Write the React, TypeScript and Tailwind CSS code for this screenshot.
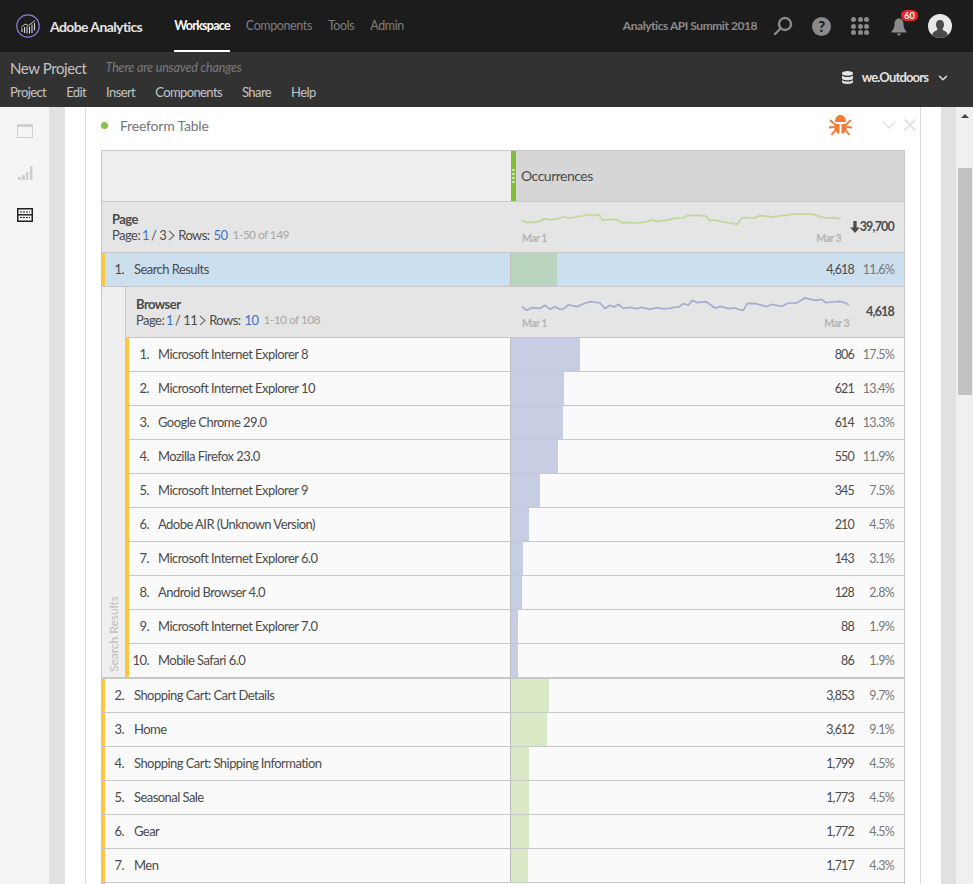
import { ChevronDown, X } from "lucide-react";

const GREEN_LINE =
  "66,210 80,216 100,216 118,213 133,205 150,208 175,205 190,200 215,203 235,198 250,197 268,192 280,196 297,192 308,210 325,207 350,208 365,217 385,216 405,218 440,215 455,209 470,213 495,210 525,204 548,203 565,195 590,195 617,197 630,211 645,209 665,214 690,218 712,222 725,203 740,201 760,204 780,196 800,198 820,200 845,195 860,195 880,191 940,192 960,199 980,203 1000,202 1022,206";
const BLUE_LINE =
  "66,472 80,483 95,475 120,477 135,468 150,480 165,472 180,480 190,479 205,467 232,472 250,463 272,457 300,461 315,477 330,468 342,473 355,465 370,477 390,474 410,478 425,474 450,480 470,475 485,478 510,477 525,473 535,474 550,463 565,467 577,453 592,460 618,457 645,476 662,471 685,478 705,476 729,484 742,463 765,462 800,472 815,465 845,471 865,461 890,461 915,446 945,453 965,450 978,460 1000,458 1018,456 1035,460 1046,467";

const browsers = [
  ["1.", "Microsoft Internet Explorer 8", "806", "17.5%", 69],
  ["2.", "Microsoft Internet Explorer 10", "621", "13.4%", 53],
  ["3.", "Google Chrome 29.0", "614", "13.3%", 52],
  ["4.", "Mozilla Firefox 23.0", "550", "11.9%", 47],
  ["5.", "Microsoft Internet Explorer 9", "345", "7.5%", 29],
  ["6.", "Adobe AIR (Unknown Version)", "210", "4.5%", 18],
  ["7.", "Microsoft Internet Explorer 6.0", "143", "3.1%", 12],
  ["8.", "Android Browser 4.0", "128", "2.8%", 11],
  ["9.", "Microsoft Internet Explorer 7.0", "88", "1.9%", 7],
  ["10.", "Mobile Safari 6.0", "86", "1.9%", 7],
] as const;

const pages = [
  ["2.", "Shopping Cart: Cart Details", "3,853", "9.7%", 38],
  ["3.", "Home", "3,612", "9.1%", 36],
  ["4.", "Shopping Cart: Shipping Information", "1,799", "4.5%", 18],
  ["5.", "Seasonal Sale", "1,773", "4.5%", 18],
  ["6.", "Gear", "1,772", "4.5%", 18],
  ["7.", "Men", "1,717", "4.3%", 17],
] as const;

function Logo() {
  return (
    <svg width="24" height="24" viewBox="0 0 24 24" fill="none">
      <circle cx="12" cy="12" r="11.2" stroke="#8f7fe0" strokeWidth="1.2" />
      <path d="M5 13.5 9 10l3.5 1.5L19 6.5" stroke="#d8d8d8" strokeWidth="0.9" />
      <path d="M6 14.5v3.5M8.5 13v6M11 12.5v7M13.5 12.5v7M16 10.5v8.5M18.5 9v7.5" stroke="#d8d8d8" strokeWidth="1.1" />
    </svg>
  );
}

function Bug() {
  return (
    <svg width="25" height="21" viewBox="0 0 25 21" fill="#f47b35" stroke="none">
      <path d="M7 7C7 2.500 9.500 0 12.500 0S18 2.500 18 7z" />
      <path d="M6.500 9h5v9.500h-2L6.500 15zM13.500 9h5v6l-3 3.500h-2z" />
      <path d="M2 5l5 4.500M1 12.500l5.500-.5M3.500 20l3.500-4.500M23 5l-5 4.500M24 12.500l-5.500-.5M21.500 20 18 15.500" stroke="#f47b35" strokeWidth="2" />
    </svg>
  );
}

function Pager({ page, total, rows, range }: { page: string; total: string; rows: string; range: string }) {
  return (
    <div className="flex items-center">
      <span>Page:</span>
      <span className="ml-[2px] text-[#3f6fc8]">{page}</span>
      <span className="ml-[2px]">/ {total}</span>
      <svg className="ml-px" width="9" height="11" viewBox="0 0 9 11" fill="none" stroke="#777" strokeWidth="1.3">
        <path d="M2 1l5 4.500L2 10" />
      </svg>
      <span className="ml-[2px]">Rows:</span>
      <span className="ml-[4px] text-[#3f6fc8]">{rows}</span>
      <span className="ml-[5px] text-[12px] tracking-[-0.6px] text-[#a8a8a8]">{range}</span>
    </div>
  );
}

function Row({ num, label, count, pct, bar, nested, selected }: { num: string; label: string; count: string; pct: string; bar: number; nested?: boolean; selected?: boolean }) {
  return (
    <div className={`flex h-[34px] border-b border-[#c8c8c8] ${selected ? "bg-[#cbdfee]" : "bg-[#fafafa]"}`}>
      <div className="flex min-w-0 flex-1 items-center whitespace-nowrap border-l-[3px] border-[#fdc642]">
        <span className={`shrink-0 pr-[9px] text-right ${nested ? "w-[29px]" : "w-[29px] -translate-x-px"}`}>{num}</span>
        <span>{label}</span>
      </div>
      <div className="flex w-[394px] border-l border-[#bdbdbd]">
        <div className={selected ? "bg-[#b9d5bf]" : nested ? "bg-[#c7cde2]" : "bg-[#d9e9c6]"} style={{ width: bar }} />
        <div className="flex-1" />
        <span className="self-center pt-px text-[12.500px] tracking-[-0.8px]">{count}</span>
        <span className="w-[50px] self-center pr-[10px] pt-px text-right text-[12.500px] tracking-[-0.7px] text-[#777]">{pct}</span>
      </div>
    </div>
  );
}

export default function App() {
  return (
    <div className="flex h-[884px] w-[973px] flex-col overflow-hidden bg-white text-[13px] tracking-[-0.55px] text-[#4b4b4b] font-['Lato','Open_Sans',sans-serif]">
      {/* top bar */}
      <div className="flex h-[52px] items-center bg-[#1c1c1c] pl-[16px] pr-[21px]">
        <Logo />
        <span className="ml-[10px] text-[14px] font-bold tracking-[-0.6px] text-[#e4e4e4]">Adobe Analytics</span>
        <div className="ml-[32px] flex h-full items-center gap-[16px] text-[12.500px] tracking-[-0.4px] text-[#7d7d7d]">
          <span className="flex h-full items-center border-b-2 border-white pt-[2px] font-bold tracking-[-0.75px] text-white">Workspace</span>
          <span>Components</span>
          <span>Tools</span>
          <span>Admin</span>
        </div>
        <span className="ml-auto text-[12px] font-bold tracking-[-0.45px] text-[#8b8b8b]">Analytics API Summit 2018</span>
        <svg className="ml-[16px]" width="20" height="20" viewBox="0 0 20 20" fill="none" stroke="#8a8a8a" strokeWidth="2.4">
          <circle cx="12" cy="8" r="6" />
          <path d="M7.500 12.500 2 18" strokeLinecap="round" />
        </svg>
        <div className="ml-[19px] flex h-[19px] w-[19px] items-center justify-center rounded-full bg-[#8a8a8a] text-[15px] font-black text-[#1c1c1c]">?</div>
        <div className="ml-[20px] grid grid-cols-3 gap-[1.500px]">
          {Array.from({ length: 9 }).map((_, i) => (
            <div key={i} className="h-[5px] w-[5px] rounded-full bg-[#8a8a8a]" />
          ))}
        </div>
        <div className="relative ml-[22px] mt-[2px]">
          <svg width="16" height="18" viewBox="0 0 16 18" fill="#8a8a8a">
            <path d="M8 0.500c-3 0-4.500 2.500-4.500 5.500 0 4-1.500 6-3 7.500v1h15v-1c-1.500-1.500-3-3.500-3-7.500 0-3-1.500-5.500-4.500-5.500zM6 15.500h4a2 2 0 0 1-4 0z" />
          </svg>
          <span className="absolute left-[10px] top-[-8px] flex h-[11px] w-[17px] items-center justify-center rounded-full bg-[#e8262a] text-[9px] font-bold tracking-normal text-white">60</span>
        </div>
        <div className="ml-[21px] flex h-[24px] w-[24px] items-end justify-center overflow-hidden rounded-full bg-[#e8e8e8]">
          <svg width="18" height="20" viewBox="0 0 18 20" fill="#4a4a4a">
            <path d="M9 2c2.800 0 4 2 4 4.500 0 2-1 3.500-1.500 4.500 0 1 1 1.500 3 2.500 1.500.8 2.500 2 2.500 6.500H1c0-4.500 1-5.700 2.500-6.500 2-1 3-1.500 3-2.500C6 10 5 8.500 5 6.500 5 4 6.200 2 9 2z" />
          </svg>
        </div>
      </div>

      {/* project bar */}
      <div className="flex h-[55px] items-start justify-between bg-[#323232] pl-[10px] pr-[23px] text-[#c4c4c4]">
        <div className="flex flex-col">
          <div className="mt-[5px] flex h-[22px] items-center">
            <span className="text-[15px] tracking-[-0.4px]">New Project</span>
            <span className="ml-[19px] text-[12.500px] italic tracking-[-0.15px] text-[#7b7b7b]">There are unsaved changes</span>
          </div>
          <div className="mt-[4px] flex gap-[20px] tracking-[-0.6px]">
            <span>Project</span>
            <span>Edit</span>
            <span>Insert</span>
            <span>Components</span>
            <span>Share</span>
            <span>Help</span>
          </div>
        </div>
        <div className="mt-[16px] flex items-center text-[#e2e2e2]">
          <svg width="11" height="13" viewBox="0 0 11 13" fill="#e6e6e6">
            <path d="M0 2c0-1 2.500-2 5.500-2S11 1 11 2v.8C11 4 8.500 4.800 5.500 4.800S0 4 0 2.800zM0 4.500C1 5.500 3 6 5.500 6S10 5.500 11 4.500v3c0 1-2.500 1.800-5.500 1.800S0 8.500 0 7.500zM0 9c1 1 3 1.500 5.500 1.500S10 10 11 9v2c0 1-2.500 2-5.500 2S0 12 0 11z" />
          </svg>
          <span className="ml-[9px] font-bold tracking-[-0.85px]">we.Outdoors</span>
          <ChevronDown className="ml-[8px]" size={14} strokeWidth={2.500} />
        </div>
      </div>

      <div className="flex min-h-0 flex-1">
        {/* left rail */}
        <div className="flex w-[49px] shrink-0 flex-col items-center gap-[27px] bg-[#f5f5f5] pt-[17px] pl-px">
          <svg width="16" height="14" viewBox="0 0 16 14" fill="none" stroke="#cfcfcf" strokeWidth="1">
            <rect x="0.500" y="0.500" width="15" height="13" />
            <path d="M0.500 2h15" strokeWidth="2" />
          </svg>
          <svg width="16" height="16" viewBox="0 0 16 16" fill="#cfcfcf">
            <path d="M1 12h3v3H1zM5 10h3v5H5zM9 7h2.500v8H9zM13 1h2.500v14H13z" />
          </svg>
          <svg width="16" height="14" viewBox="0 0 16 14" fill="none" stroke="#222" strokeWidth="1.500">
            <rect x="0.750" y="0.750" width="14.500" height="12.500" />
            <path d="M0.600 6.800h14.800" />
            <path d="M3 4h10M3 9.500h10" strokeWidth="1" strokeDasharray="2 1" />
          </svg>
        </div>
        <div className="w-[16px] shrink-0 bg-[#e1e1e1]" />
        <div className="w-[20px] shrink-0" />

        {/* panel */}
        <div className="w-[836px] shrink-0 border-x border-[#dcdcdc] px-[15px]">
          <div className="flex h-[43px] items-center pb-[7px]">
            <span className="h-[7px] w-[7px] rounded-full bg-[#8cc04b]" />
            <span className="ml-[12px] text-[14px] tracking-[-0.2px] text-[#777]">Freeform Table</span>
            <div className="ml-auto mr-[-15px] flex items-center">
              <Bug />
              <ChevronDown className="ml-[24px]" size={24} color="#e4e4e4" strokeWidth={1.500} />
              <X className="ml-[-1px]" size={20} color="#e4e4e4" strokeWidth={2.500} />
            </div>
          </div>

          <div className="border border-[#c8c8c8]">
            {/* column header */}
            <div className="flex h-[51px] border-b border-[#c8c8c8] bg-[#eeeeee]">
              <div className="flex-1" />
              <div className="flex w-[393px] items-center bg-[#d6d6d6]">
                <div className="flex h-full w-[5px] flex-col items-center justify-center gap-[1.500px] bg-[#80bd3c]">
                  {[0, 1, 2, 3].map((i) => (
                    <span key={i} className="h-[2.500px] w-[2.500px] rounded-full bg-[#d4e8bc]" />
                  ))}
                </div>
                <span className="mb-[2px] ml-[5px] text-[14px] tracking-[-0.5px] text-[#4b4b4b]">Occurrences</span>
              </div>
            </div>

            {/* Page header */}
            <div className="flex h-[51px] border-b border-[#c8c8c8] bg-[#e5e5e5]">
              <div className="flex flex-1 flex-col pl-[10px] pt-[9px] leading-[16px]">
                <span className="font-bold">Page</span>
                <Pager page="1" total="3" rows="50" range="1-50 of 149" />
              </div>
              <div className="flex w-[394px] px-[10px] pt-[10px]">
                <div className="flex w-[321px] flex-col">
                  <svg className="shrink-0" width="323" height="14" viewBox="60 185 969 42" fill="none" stroke="#bcd89a" strokeWidth="5">
                    <polyline points={GREEN_LINE} />
                  </svg>
                  <div className="mt-[5px] flex justify-between pl-[2px] text-[10.500px] font-bold text-[#b4b4b4]">
                    <span>Mar 1</span>
                    <span>Mar 3</span>
                  </div>
                </div>
                <div className="mt-[7px] flex flex-1 items-center justify-end self-start font-bold leading-[16px]">
                  <svg className="shrink-0" width="10" height="12" viewBox="0 0 9 11" fill="#4b4b4b">
                    <path d="M3 0h3v6h3l-4.500 5L0 6h3z" />
                  </svg>
                  <span className="text-[12.500px] tracking-[-0.8px]">39,700</span>
                </div>
              </div>
            </div>

            <Row num="1." label="Search Results" count="4,618" pct="11.6%" bar={46} selected />

            {/* Browser breakdown */}
            <div className="flex border-b-2 border-[#c8c8c8]">
              <div className="flex w-[24px] shrink-0 items-end justify-center border-r border-[#c8c8c8] bg-[#efefef] pb-[5px] pl-px">
                <span className="rotate-180 text-[12px] tracking-[0px] text-[#bdbdbd] [writing-mode:vertical-rl]">Search Results</span>
              </div>
              <div className="min-w-0 flex-1">
                <div className="flex h-[51px] border-b border-[#c8c8c8] bg-[#e5e5e5]">
                  <div className="flex flex-1 flex-col pl-[10px] pt-[9px] leading-[16px]">
                    <span className="font-bold">Browser</span>
                    <Pager page="1" total="11" rows="10" range="1-10 of 108" />
                  </div>
                  <div className="flex w-[394px] px-[10px] pt-[10px]">
                    <div className="flex w-[329px] flex-col">
                      <svg className="shrink-0" width="331" height="14" viewBox="60 443 993 42" fill="none" stroke="#a3abd0" strokeWidth="5">
                        <polyline points={BLUE_LINE} />
                      </svg>
                      <div className="mt-[5px] flex justify-between pl-[2px] text-[10.500px] font-bold text-[#b4b4b4]">
                        <span>Mar 1</span>
                        <span>Mar 3</span>
                      </div>
                    </div>
                    <div className="mt-[7px] flex-1 text-right text-[12.500px] font-bold leading-[16px] tracking-[-0.8px]">4,618</div>
                  </div>
                </div>
                {browsers.map(([num, label, count, pct, bar], i) => (
                  <div key={num} className={i === browsers.length - 1 ? "-mb-px" : ""}>
                    <Row num={num} label={label} count={count} pct={pct} bar={bar} nested />
                  </div>
                ))}
              </div>
            </div>

            {pages.map(([num, label, count, pct, bar]) => (
              <Row key={num} num={num} label={label} count={count} pct={pct} bar={bar} />
            ))}
            <div className="h-[34px] border-l-[3px] border-[#fdc642] bg-[#fafafa]" />
          </div>
        </div>

        <div className="w-[20px] shrink-0" />
        <div className="w-[15px] shrink-0 bg-[#e1e1e1]" />

        {/* scrollbar */}
        <div className="flex w-[17px] shrink-0 flex-col items-center bg-[#f0f0f0] pt-[7px]">
          <div className="h-0 w-0 border-x-[4px] border-b-[4px] border-x-transparent border-b-[#444]" />
          <div className="mt-[50px] h-[227px] w-[14px] bg-[#c2c2c2]" />
        </div>
      </div>
    </div>
  );
}
